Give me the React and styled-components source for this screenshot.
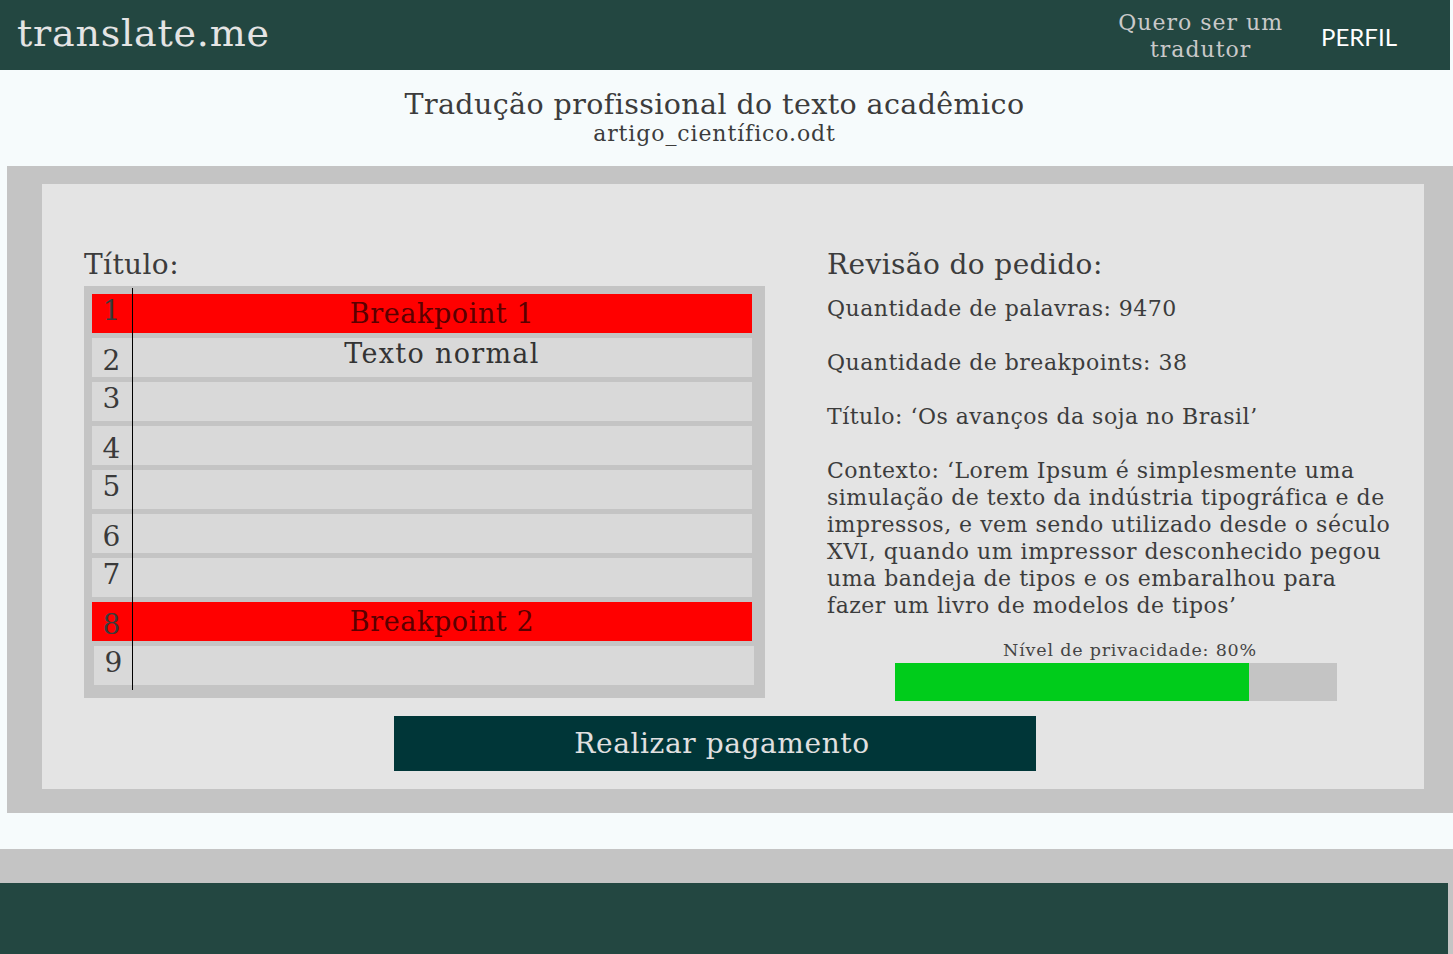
import React from 'react';
import styled, { createGlobalStyle } from 'styled-components';

const GlobalStyle = createGlobalStyle`
  body {
    margin: 0;
    background-color: #f6fbfc;
    font-family: 'DejaVu Serif', 'Liberation Serif', serif;
    color: #3c3c3c;
  }
  * {
    box-sizing: border-box;
  }
`;

const Header = styled.header`
  height: 70px;
  background-color: #234741;
  display: flex;
  align-items: center;
  justify-content: space-between;
  padding: 0 53px 0 17px;
  margin-right: 3px;
`;

const Logo = styled.h1`
  margin: 0;
  font-weight: normal;
  font-size: 38px;
  color: #e4e4e4;
  letter-spacing: 0.8px;
  padding-bottom: 4px;
`;

const Nav = styled.nav`
  display: flex;
  align-items: center;
  gap: 38px;
`;

const NavLink = styled.a`
  text-align: center;
  font-size: ${(p) => (p.$sans ? '24px' : '22px')};
  letter-spacing: ${(p) => (p.$sans ? '0' : '1px')};
  line-height: 27px;
  color: ${(p) => (p.$sans ? '#ffffff' : '#c9c9c9')};
  font-family: ${(p) =>
    p.$sans ? "Lato, 'Open Sans', sans-serif" : "'DejaVu Serif', serif"};
  text-decoration: none;
  padding-top: 2px;
`;

const PageTitle = styled.section`
  height: 96px;
  padding-top: 18px;
  text-align: center;
  padding-right: 24px;

  h2 {
    margin: 0;
    font-weight: normal;
    font-size: 28.5px;
    letter-spacing: 0.4px;
    line-height: 34px;
  }

  p {
    margin: 0;
    font-size: 22px;
    letter-spacing: 0.9px;
    line-height: 24px;
  }
`;

const Outer = styled.div`
  margin-left: 7px;
  background-color: #c4c4c4;
  padding: 18px 29px 24px 35px;
`;

const Panel = styled.div`
  background-color: #e4e4e4;
  padding: 61px 18px 18px 42px;
  display: grid;
  grid-template-columns: 681px 1fr;
  column-gap: 62px;
`;

const Heading = styled.h3`
  margin: 0 0 1px;
  font-weight: normal;
  font-size: 28px;
  letter-spacing: 0.4px;
  line-height: 40px;
  height: 40px;
`;

const Editor = styled.div`
  position: relative;
  background-color: #c4c4c4;
  padding: 8px 13px 13px 8px;
  display: flex;
  flex-direction: column;
  gap: 5px;

  &::before {
    content: '';
    position: absolute;
    left: 48px;
    top: 2px;
    bottom: 8px;
    width: 1px;
    background-color: #000;
  }
`;

const Row = styled.div`
  height: 39px;
  display: flex;
  background-color: ${(p) => (p.$break ? '#ff0000' : '#d9d9d9')};
  margin-left: ${(p) => p.$shift || 0}px;
  margin-right: -${(p) => p.$shift || 0}px;
`;

const LineNo = styled.span`
  width: 40px;
  display: flex;
  justify-content: center;
  align-items: ${(p) => (p.$low ? 'flex-end' : 'flex-start')};
  font-size: 28px;
  line-height: 30px;
  padding: ${(p) => (p.$low ? '0 1px 1px 0' : '2px 1px 0 0')};
  color: #3a3a3a;
`;

const LineText = styled.span`
  flex: 1;
  display: flex;
  justify-content: center;
  align-items: ${(p) => (p.$top ? 'flex-start' : 'center')};
  font-size: 27px;
  letter-spacing: ${(p) => (p.$break ? '0.6px' : '1.3px')};
  line-height: 32px;
  color: ${(p) => (p.$break ? '#5a0000' : '#333')};
`;

const Review = styled.div`
  p {
    margin: 0 0 27px;
    font-size: 22px;
    letter-spacing: 0.5px;
    line-height: 27px;
    white-space: nowrap;
  }

  p:first-of-type {
    margin-top: 10px;
  }

  p.context {
    margin-bottom: 20px;
  }
`;

const Privacy = styled.div`
  margin-left: 68px;
  width: 442px;
`;

const PrivacyLabel = styled.div`
  text-align: center;
  padding-left: 28px;
  font-size: 17.5px;
  letter-spacing: 0.8px;
  line-height: 22px;
  color: #444;
`;

const Bar = styled.div`
  height: 38px;
  background-color: #c4c4c4;
  margin-top: 2px;
`;

const BarFill = styled.div`
  height: 100%;
  background-color: #00cc1b;
`;

const PayButton = styled.button`
  grid-column: 1 / span 2;
  justify-self: start;
  margin: 15px 0 0 310px;
  width: 642px;
  height: 55px;
  border: none;
  padding: 0 0 0 14px;
  background-color: #003638;
  color: #e0e0e0;
  font-family: 'DejaVu Serif', serif;
  font-size: 28px;
  letter-spacing: 0.6px;
  cursor: pointer;
`;

const Spacer = styled.div`
  height: 36px;
`;

const FooterWrap = styled.footer`
  background-color: #c4c4c4;
  padding: 34px 5px 0 0;
`;

const FooterBar = styled.div`
  height: 71px;
  background-color: #234741;
`;

const rows = [
  { n: 1, text: 'Breakpoint 1', brk: true },
  { n: 2, text: 'Texto normal', low: true, top: true },
  { n: 3 },
  { n: 4, low: true },
  { n: 5 },
  { n: 6, low: true },
  { n: 7 },
  { n: 8, text: 'Breakpoint 2', brk: true, low: true },
  { n: 9, shift: 2 },
];

const App = () => {
  const privacy = 80;
  return (
    <>
      <GlobalStyle />
      <Header>
        <Logo>translate.me</Logo>
        <Nav>
          <NavLink href="#">
            Quero ser um
            <br />
            tradutor
          </NavLink>
          <NavLink href="#" $sans>
            PERFIL
          </NavLink>
        </Nav>
      </Header>
      <PageTitle>
        <h2>Tradução profissional do texto acadêmico</h2>
        <p>artigo_científico.odt</p>
      </PageTitle>
      <Outer>
        <Panel>
          <div>
            <Heading>Título:</Heading>
            <Editor>
              {rows.map((r) => (
                <Row key={r.n} $break={r.brk} $shift={r.shift}>
                  <LineNo $low={r.low}>{r.n}</LineNo>
                  <LineText $break={r.brk} $top={r.top}>
                    {r.text}
                  </LineText>
                </Row>
              ))}
            </Editor>
          </div>
          <Review>
            <Heading>Revisão do pedido:</Heading>
            <p>Quantidade de palavras: 9470</p>
            <p>Quantidade de breakpoints: 38</p>
            <p>Título: ‘Os avanços da soja no Brasil’</p>
            <p className="context">
              Contexto: ‘Lorem Ipsum é simplesmente uma
              <br />
              simulação de texto da indústria tipográfica e de
              <br />
              impressos, e vem sendo utilizado desde o século
              <br />
              XVI, quando um impressor desconhecido pegou
              <br />
              uma bandeja de tipos e os embaralhou para
              <br />
              fazer um livro de modelos de tipos’
            </p>
            <Privacy>
              <PrivacyLabel>Nível de privacidade: {privacy}%</PrivacyLabel>
              <Bar>
                <BarFill style={{ width: `${privacy}%` }} />
              </Bar>
            </Privacy>
          </Review>
          <PayButton>Realizar pagamento</PayButton>
        </Panel>
      </Outer>
      <Spacer />
      <FooterWrap>
        <FooterBar />
      </FooterWrap>
    </>
  );
};

export default App;
